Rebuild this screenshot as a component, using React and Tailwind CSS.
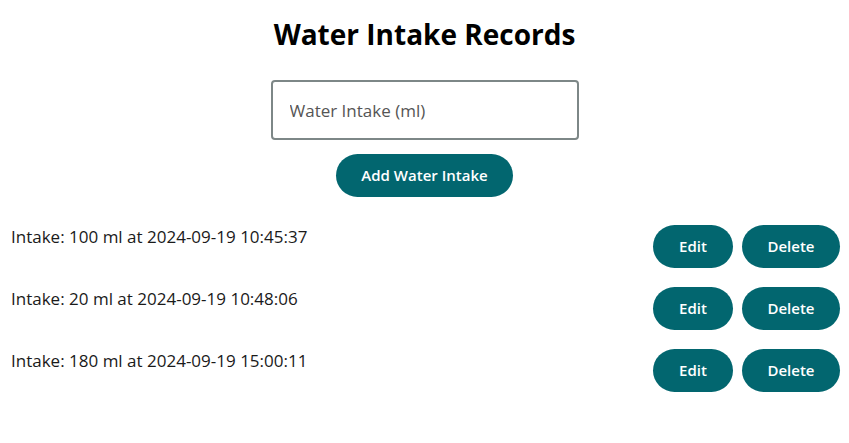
const records = [
  { id: 1, amount: 100, time: '2024-09-19 10:45:37' },
  { id: 2, amount: 20, time: '2024-09-19 10:48:06' },
  { id: 3, amount: 180, time: '2024-09-19 15:00:11' },
];

export default function App() {
  return (
    <div className="min-h-screen bg-white text-[#1a1a1a] font-['Open_Sans',sans-serif]">
      {/* Header + form */}
      <div className="flex flex-col items-center pt-[14px]">
        <h1 className="text-[28px] font-bold leading-[40px] text-black">Water Intake Records</h1>
        <input
          type="text"
          placeholder="Water Intake (ml)"
          className="mt-[26px] w-[308px] h-[60px] px-[17px] border-2 border-[#7d8787] rounded-[4px] text-[17px] placeholder-[#555] outline-none"
        />
        <button className="mt-[14px] w-[177px] h-[43px] rounded-full bg-[#02666f] text-white text-[15px] font-semibold">
          Add Water Intake
        </button>
      </div>

      {/* Records */}
      <div className="mt-[28px] flex flex-col gap-[19px]">
        {records.map((r) => (
          <div key={r.id} className="flex justify-between items-start pl-[11px] pr-[9px]">
            <span className="text-[17px] leading-[24px]">
              Intake: {r.amount} ml at {r.time}
            </span>
            <div className="flex gap-[9px]">
              <button className="w-[80px] h-[43px] rounded-full bg-[#02666f] text-white text-[15px] font-semibold">Edit</button>
              <button className="w-[98px] h-[43px] rounded-full bg-[#02666f] text-white text-[15px] font-semibold">Delete</button>
            </div>
          </div>
        ))}
      </div>
    </div>
  );
}
